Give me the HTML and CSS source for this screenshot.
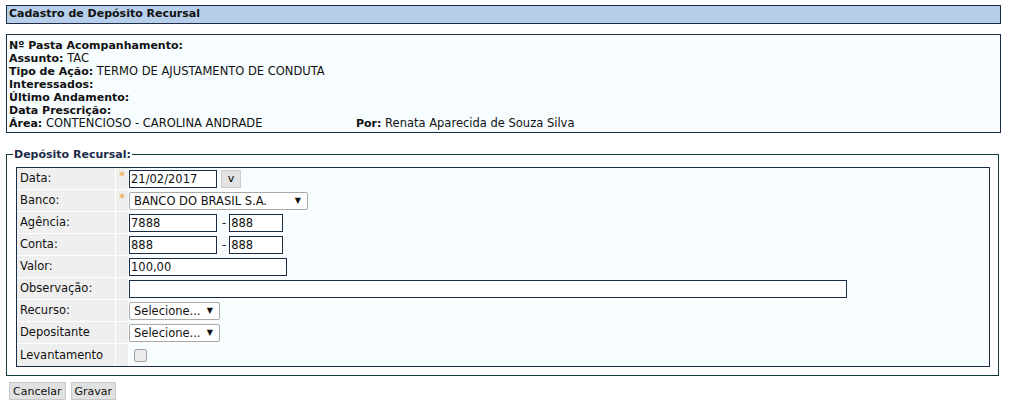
FILE: index.html
```html
<!DOCTYPE html>
<html lang="pt-BR">
<head>
    <meta charset="UTF-8">
    <title>Cadastro de Depósito Recursal</title>
    <link rel="stylesheet" href="styles.css">
</head>
<body>
    <div class="titulo">Cadastro de Depósito Recursal</div>

    <div class="resumo">
        <div><b>Nº Pasta Acompanhamento:</b></div>
        <div><b>Assunto:</b> TAC</div>
        <div><b>Tipo de Ação:</b> TERMO DE AJUSTAMENTO DE CONDUTA</div>
        <div><b>Interessados:</b></div>
        <div><b>Último Andamento:</b></div>
        <div><b>Data Prescrição:</b></div>
        <div class="linha-area">
            <span class="area"><b>Área:</b> CONTENCIOSO - CAROLINA ANDRADE</span>
            <span><b>Por:</b> Renata Aparecida de Souza Silva</span>
        </div>
    </div>

    <fieldset class="deposito">
        <legend>Depósito Recursal:</legend>
        <table class="form-tab">
            <tr>
                <td class="rot">Data:</td>
                <td class="obr">*</td>
                <td class="val"><div class="cx"><input type="text" class="campo w88" value="21/02/2017"><button class="btn-cal">v</button></div></td>
            </tr>
            <tr>
                <td class="rot">Banco:</td>
                <td class="obr">*</td>
                <td class="val"><div class="cx"><span class="combo w179">BANCO DO BRASIL S.A.<i>▼</i></span></div></td>
            </tr>
            <tr>
                <td class="rot">Agência:</td>
                <td class="obr"></td>
                <td class="val"><div class="cx"><input type="text" class="campo w88" value="7888"><span class="traco">-</span><input type="text" class="campo w54" value="888"></div></td>
            </tr>
            <tr>
                <td class="rot">Conta:</td>
                <td class="obr"></td>
                <td class="val"><div class="cx"><input type="text" class="campo w88" value="888"><span class="traco">-</span><input type="text" class="campo w54" value="888"></div></td>
            </tr>
            <tr>
                <td class="rot">Valor:</td>
                <td class="obr"></td>
                <td class="val"><div class="cx"><input type="text" class="campo w158" value="100,00"></div></td>
            </tr>
            <tr>
                <td class="rot">Observação:</td>
                <td class="obr"></td>
                <td class="val"><div class="cx"><input type="text" class="campo w718" value=""></div></td>
            </tr>
            <tr>
                <td class="rot">Recurso:</td>
                <td class="obr"></td>
                <td class="val"><div class="cx"><span class="combo w91">Selecione...<i>▼</i></span></div></td>
            </tr>
            <tr>
                <td class="rot">Depositante</td>
                <td class="obr"></td>
                <td class="val"><div class="cx"><span class="combo w91">Selecione...<i>▼</i></span></div></td>
            </tr>
            <tr>
                <td class="rot">Levantamento</td>
                <td class="obr"></td>
                <td class="val"><div class="cx"><span class="check"></span></div></td>
            </tr>
        </table>
    </fieldset>

    <div class="acoes">
        <button class="btn">Cancelar</button>
        <button class="btn">Gravar</button>
    </div>
</body>
</html>
```
FILE: styles.css
```css
body {
    margin: 0;
    padding: 5px 8px 0 6px;
    background: #fff;
    font-family: "DejaVu Sans", Verdana, sans-serif;
    font-size: 11.5px;
    color: #111;
}

b {
    font-size: 11px;
}

.titulo {
    background: #b8cfea;
    border: 1px solid #1b2c47;
    padding: 1px 2px 2px;
    font-size: 11px;
    font-weight: bold;
    line-height: 14px;
}

.resumo {
    margin-top: 10px;
    background: #f7fdff;
    border: 1px solid #1b2c47;
    padding: 4px 2px 2px;
    line-height: 13px;
}

.linha-area {
    display: flex;
}

.linha-area .area {
    width: 347px;
}

.deposito {
    margin: 15px 2px 0 0;
    padding: 6px 8px 8px 9px;
    border: 1px solid #0e3b3b;
}

.deposito legend {
    padding: 0 1px;
    font-weight: bold;
    font-size: 11px;
    color: #1b2c47;
    margin-left: -3px;
}

.form-tab {
    width: 100%;
    border: 1px solid #1b2c47;
    border-collapse: separate;
    border-spacing: 0;
    background: #f7fdff;
}

.form-tab td {
    height: 21px;
    padding: 0;
    line-height: 21px;
    border-bottom: 1px solid #fff;
}

.form-tab tr:last-child td {
    height: 22px;
    border-bottom: none;
}

.rot {
    width: 95px;
    background: #efefef;
    padding-left: 3px !important;
    border-right: 1px solid #fff;
}

.obr {
    width: 12px;
    background: #efefef;
    color: #f0a030;
    text-align: center;
    vertical-align: top;
    line-height: 17px !important;
}

.val {
    padding-left: 1px !important;
}

.cx {
    display: flex;
    align-items: center;
    height: 21px;
}

.campo {
    box-sizing: border-box;
    height: 18px;
    border: 1px solid #1b2c47;
    padding: 0 1px;
    font: 11.5px "DejaVu Sans", Verdana, sans-serif;
    color: #111;
    background: #fff;
}

.w88 { width: 88px; }
.w54 { width: 54px; }
.w158 { width: 158px; }
.w718 { width: 718px; }

.traco {
    margin: 0 3px 0 5px;
    line-height: 18px;
}

.btn-cal {
    height: 18px;
    width: 20px;
    margin-left: 4px;
    border: 1px solid #ccc;
    background: #e3e3e3;
    font: 11px "DejaVu Sans", Verdana, sans-serif;
    padding: 0;
}

.combo {
    box-sizing: border-box;
    display: flex;
    align-items: center;
    justify-content: space-between;
    height: 18px;
    line-height: 16px;
    padding: 0 6px 0 4px;
    border: 1px solid #a9a9a9;
    border-radius: 2px;
    background: #fff;
}

.combo i {
    font-style: normal;
    font-size: 8px;
}

.w179 { width: 179px; }
.w91 { width: 91px; }

.check {
    display: block;
    width: 11px;
    height: 11px;
    margin-left: 5px;
    border: 1px solid #a0a0a0;
    border-radius: 2px;
    background: #ececec;
}

.acoes {
    margin-top: 6px;
    padding-left: 3px;
    display: flex;
    gap: 5px;
}

.btn {
    height: 18px;
    padding: 0 3px;
    border: 1px solid #c8c8c8;
    background: #e1e1e1;
    font: 11px "DejaVu Sans", Verdana, sans-serif;
    color: #111;
}
```
